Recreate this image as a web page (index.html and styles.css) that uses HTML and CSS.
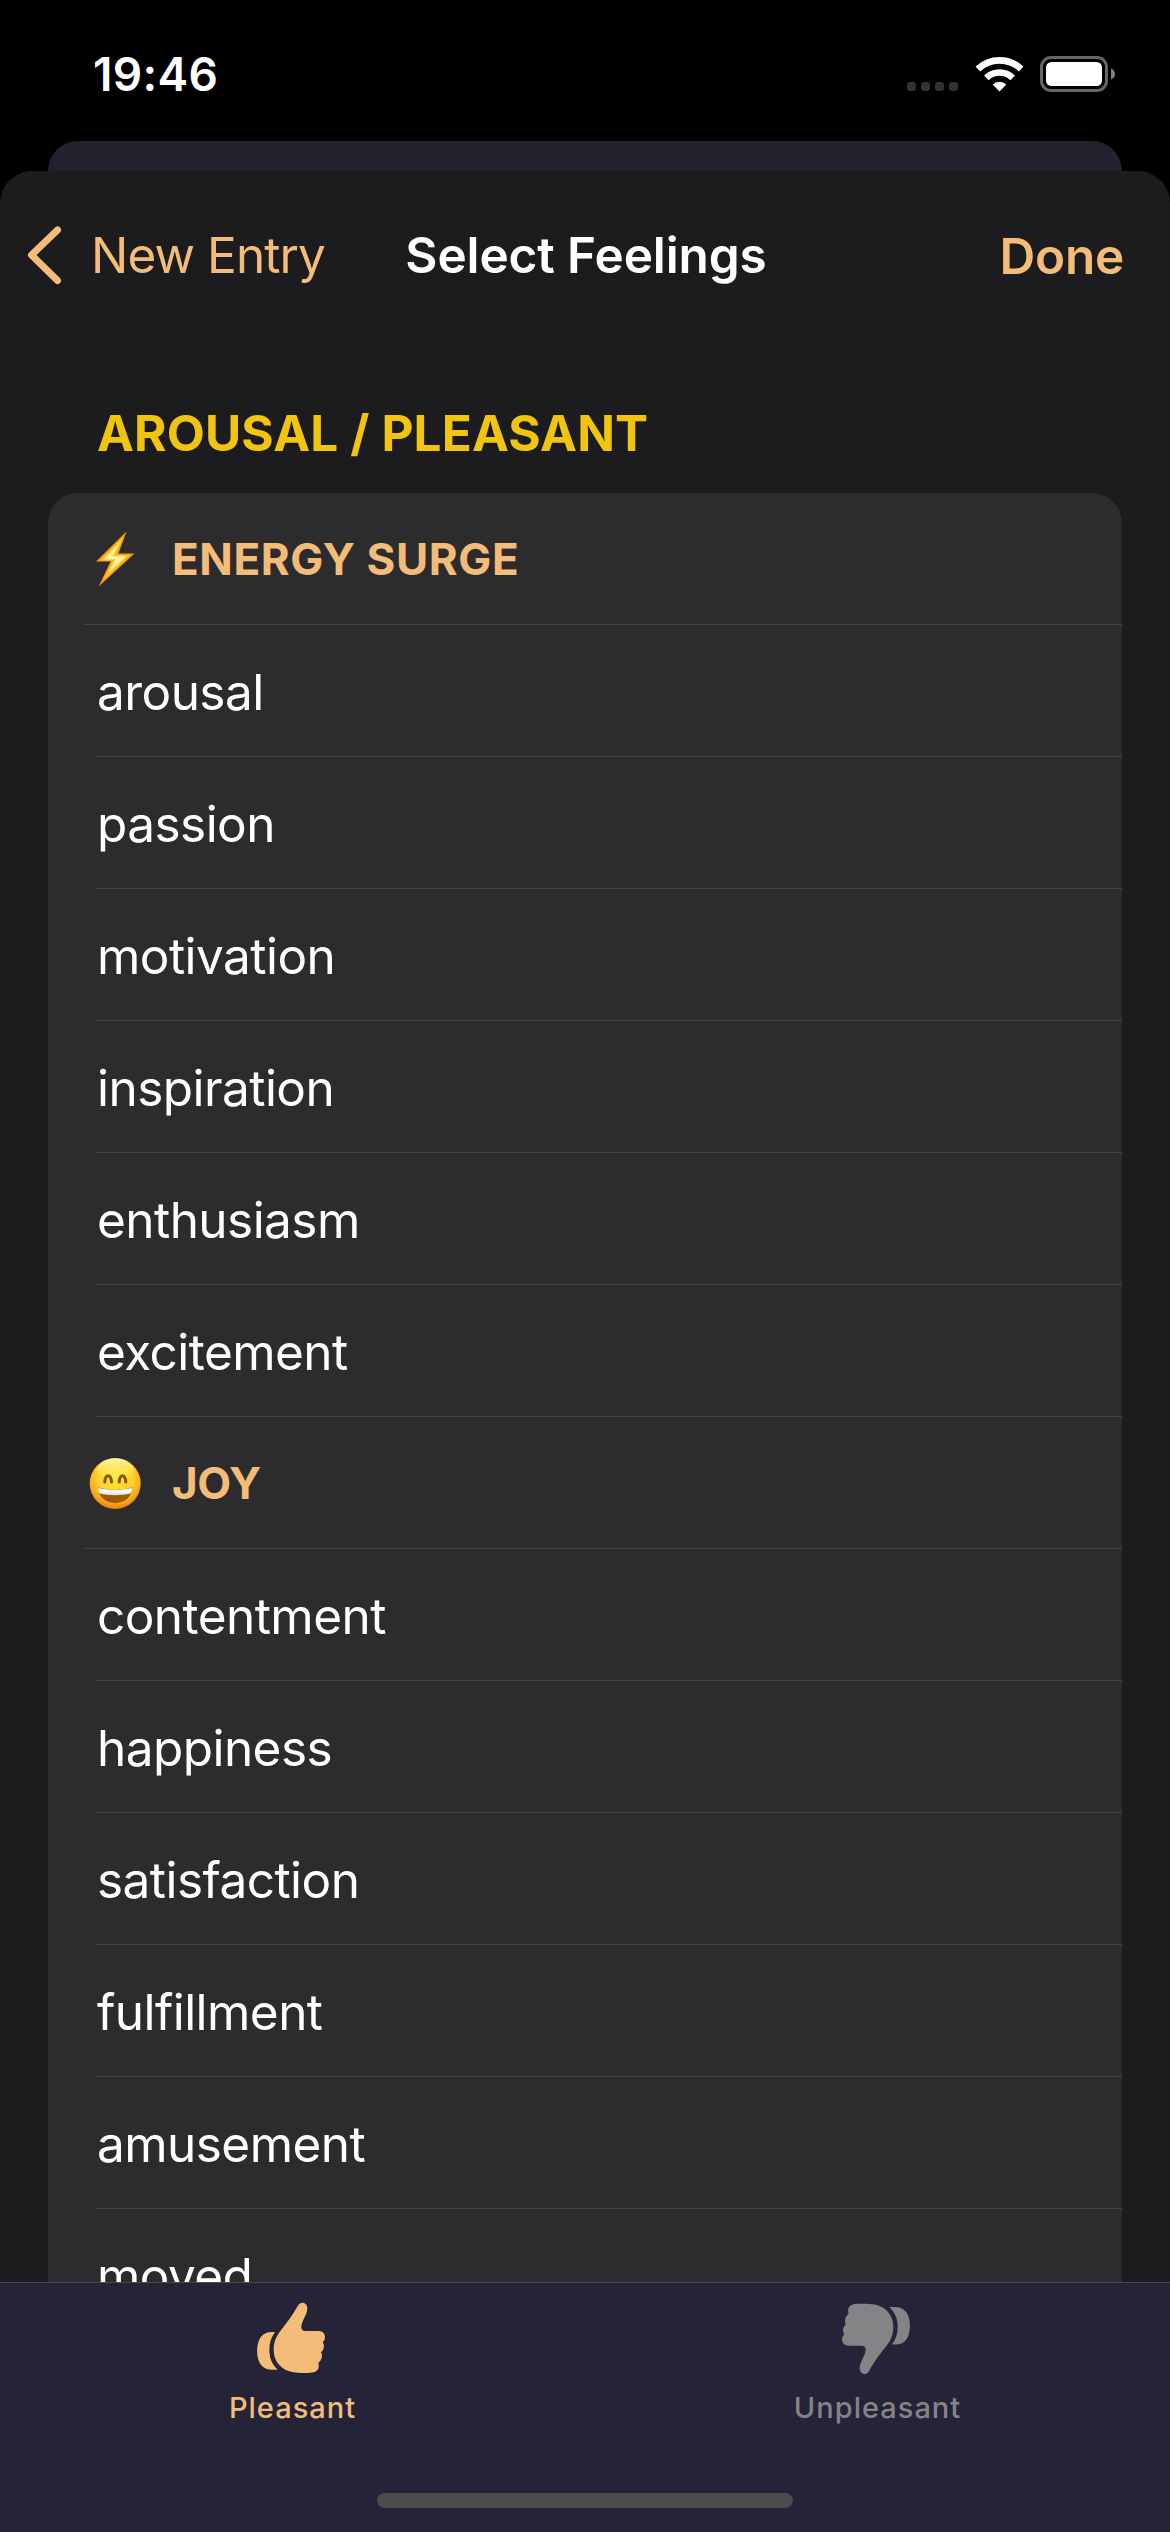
FILE: index.html
```
<!DOCTYPE html>
<html lang="en">
<head>
<meta charset="utf-8">
<title>Select Feelings</title>
<link rel="stylesheet" href="styles.css">
</head>
<body>
<div class="screen">
  <header class="status">
    <span class="clock">19:46</span>
    <div class="indicators">
      <div class="cell"><i></i><i></i><i></i><i></i></div>
      <svg class="wifi" viewBox="0 0 147 110" aria-hidden="true">
        <g fill="none" stroke="#fff" stroke-width="20">
          <path d="M8.500 41.500 A94 94 0 0 1 138.500 41.500"/>
          <path d="M34 68 A57 57 0 0 1 113 68"/>
        </g>
        <path d="M73.500 109 L53 88 A29 29 0 0 1 94 88Z" fill="#fff"/>
      </svg>
      <svg class="battery" viewBox="0 0 76 36" aria-hidden="true">
        <rect x="1.500" y="1.500" width="65" height="33" rx="9.500" fill="none" stroke="#666" stroke-width="3"/>
        <rect x="6" y="6" width="56" height="24" rx="5.500" fill="#fff"/>
        <path d="M71 12.500c5.300 2 5.300 9 0 11Z" fill="#808080"/>
      </svg>
    </div>
  </header>

  <div class="parent-sheet"></div>

  <main class="sheet">
    <nav class="nav">
      <a class="back">
        <svg class="chevron" viewBox="0 0 36 60" aria-hidden="true"><path d="M31.500 5 L5.500 30 L31.500 55.500" fill="none" stroke="#f3bc79" stroke-width="7" stroke-linecap="round" stroke-linejoin="round"/></svg>
        <span>New Entry</span>
      </a>
      <h1 class="title">Select Feelings</h1>
      <a class="done">Done</a>
    </nav>

    <h2 class="section">AROUSAL / PLEASANT</h2>

    <div class="list">
      <div class="group">
        <svg class="emoji" viewBox="0 -1 80 80" aria-hidden="true">
          <path d="M46.500 11.500 L16 41.500 H30.500 L18.700 66.500 L54.500 33.500 H38.500Z" fill="#f79a0c"/>
          <path d="M43.500 16.500 L20 40.500 H33 L23 60.500 L50.500 34.700 H35.800Z" fill="#ffc928"/>
          <path d="M40.500 21.500 L24 39.300 H35.500 L28.500 53 L46 36.300 H32.500Z" fill="#fff3a6"/>
        </svg>
        <h3>ENERGY SURGE</h3>
      </div>
      <div class="row">arousal</div>
      <div class="row">passion</div>
      <div class="row">motivation</div>
      <div class="row">inspiration</div>
      <div class="row">enthusiasm</div>
      <div class="row">excitement</div>
      <div class="group">
        <svg class="emoji" viewBox="0 -0.500 80 80" aria-hidden="true">
          <defs>
            <radialGradient id="face" cx=".5" cy=".36" r=".66"><stop offset="0" stop-color="#ffe93c"/><stop offset=".5" stop-color="#ffd42c"/><stop offset=".8" stop-color="#f9a91a"/><stop offset="1" stop-color="#dd7608"/></radialGradient>
            <linearGradient id="shine" x1="0" y1="0" x2="0" y2="1"><stop offset="0" stop-color="#fff6b8" stop-opacity=".9"/><stop offset="1" stop-color="#ffee50" stop-opacity="0"/></linearGradient>
            <linearGradient id="teeth" x1="0" y1="0" x2="0" y2="1"><stop offset="0" stop-color="#d4cfca"/><stop offset=".5" stop-color="#fff"/><stop offset="1" stop-color="#d8d8dc"/></linearGradient>
          </defs>
          <circle cx="35.200" cy="40" r="25.500" fill="url(#face)"/>
          <ellipse cx="35.200" cy="26" rx="18" ry="11" fill="url(#shine)"/>
          <g fill="none" stroke="#8a5006" stroke-width="3" stroke-linecap="round"><path d="M24.800 38.500 C25.400 30 30.600 30 31.600 38.500"/><path d="M39.200 38.500 C40 30 45 30 45.800 38.500"/></g>
          <path d="M18 43.500 C28 47.500 43 47.500 52.300 43.500 C52.300 65 18 65 18 43.500Z" fill="#a05c05"/>
          <path d="M18 43.800 C28 47.300 43 47.300 52.300 43.800 C52.200 46.500 51.600 48.500 50.600 50 C41 52.200 29 52.200 19.700 50 C18.600 48.500 18 46.500 18 43.800Z" fill="url(#teeth)"/>
        </svg>
        <h3 class="tight">JOY</h3>
      </div>
      <div class="row">contentment</div>
      <div class="row">happiness</div>
      <div class="row">satisfaction</div>
      <div class="row">fulfillment</div>
      <div class="row">amusement</div>
      <div class="row">moved</div>
    </div>
  </main>

  <footer class="tabbar">
    <div class="tabs">
      <a class="tab active">
        <svg class="thumb" viewBox="171 186 213 219" aria-hidden="true">
          <g id="thumb" fill="currentColor">
            <path d="M307 188 C316 188 322 195 322 205 C322 226 304 242 304 262 C304 269 308 273 316 273 H355 C369 273 375 282 375 292 C375 299 372 304 368 306 C374 315 373 330 363 337 C369 346 366 360 355 369 C360 386 353 397 330 398.500 C315 399.500 290 399 280 397 C245 391 221 365 221 330 C221 302 231 286 245 268 C254 257 263 245 270 235 C281 219 289 205 294 197 C298 190 302 188 307 188Z"/>
            <path d="M225 277 C206 274 190 279 181 293 C168 312 168 353 181 372 C192 388 205 390 233 389 C215 372 208 352 208 330 C208 308 214 291 225 277Z"/>
          </g>
        </svg>
        <span>Pleasant</span>
      </a>
      <a class="tab">
        <svg class="thumb" viewBox="171 186 213 219" aria-hidden="true"><use href="#thumb" transform="rotate(180 273 295)"/></svg>
        <span>Unpleasant</span>
      </a>
    </div>
    <div class="home"></div>
  </footer>
</div>
</body>
</html>
```
FILE: styles.css
```
* { box-sizing: border-box; }

body {
  margin: 0;
  background: #000;
  font-family: Inter, "Liberation Sans", sans-serif;
  color: #fff;
}

h1, h2, h3 { margin: 0; }

svg { display: block; flex: none; }

.screen {
  display: flex;
  flex-direction: column;
  width: 1170px;
  height: 2532px;
  overflow: hidden;
}

/* Status bar */
.status {
  display: flex;
  justify-content: space-between;
  flex: none;
  height: 141px;
  padding: 0 54px 0 93px;
}

.clock {
  margin-top: 44px;
  font-size: 46px;
  line-height: 60px;
  font-weight: 600;
  letter-spacing: 0.33px;
}

.indicators {
  display: flex;
  align-items: flex-end;
  height: 92px;
}

.cell {
  display: flex;
  gap: 5px;
  margin: 0 17px 1px 0;
}

.cell i {
  width: 9px;
  height: 9px;
  border-radius: 3px;
  background: #333;
}

.wifi { width: 49px; height: 37px; margin-right: 16px; }
.battery { width: 76px; height: 36px; }

/* Stacked sheets */
.parent-sheet {
  flex: none;
  height: 30px;
  margin: 0 48px;
  border-radius: 30px 30px 0 0;
  background: #22212e;
}

.sheet {
  flex: 1;
  min-height: 0;
  overflow: hidden;
  border-radius: 32px 32px 0 0;
  background: #1c1c1e;
}

.nav {
  display: grid;
  grid-template-columns: 1fr auto 1fr;
  align-items: center;
  height: 168px;
  padding: 0 46px 0 26px;
  font-size: 49.5px;
  line-height: 60px;
  color: #f3bc79;
}

.back {
  display: flex;
  align-items: center;
  gap: 29px;
  letter-spacing: -0.91px;
  white-space: nowrap;
}

.chevron { width: 36px; height: 60px; }

.title {
  margin-left: 22px;
  font-size: 49.5px;
  font-weight: 600;
  letter-spacing: -0.1px;
  color: #fff;
}

.done {
  justify-self: end;
  padding-top: 2px;
  font-weight: 600;
  letter-spacing: -0.22px;
}

.section {
  height: 154px;
  padding: 64px 97px 0;
  font-size: 49.5px;
  line-height: 60px;
  font-weight: 700;
  letter-spacing: 0.13px;
  color: #f1c40f;
}

/* Feelings list */
.list {
  margin: 0 48px;
  border-radius: 30px 30px 0 0;
  background: #2c2c2e;
}

.group, .row {
  display: flex;
  align-items: center;
  height: 132px;
  border-bottom: 1px solid #444447;
}

.group { margin-left: 36px; }

.emoji { width: 80px; height: 80px; margin-left: -4px; }

.group h3 {
  margin-left: 12px;
  font-size: 44px;
  line-height: 60px;
  font-weight: 700;
  letter-spacing: 0.62px;
  color: #f3bc79;
}

.group h3.tight { letter-spacing: -0.4px; }

.row {
  margin-left: 48px;
  padding: 3px 0 0 1px;
  font-size: 49.5px;
  letter-spacing: -0.55px;
}

/* Tab bar */
.tabbar {
  display: flex;
  flex-direction: column;
  align-items: center;
  justify-content: space-between;
  flex: none;
  height: 250px;
  padding-bottom: 24px;
  border-top: 1px solid #4a4a4d;
  background: #252338;
}

.tabs {
  display: grid;
  grid-template-columns: 1fr 1fr;
  width: 100%;
}

.tab {
  display: flex;
  flex-direction: column;
  align-items: center;
  padding-top: 19px;
  font-size: 29px;
  line-height: 36px;
  font-weight: 500;
  letter-spacing: 1px;
  color: #848486;
}

.tab.active { color: #f3bc79; }

.thumb { width: 71px; height: 73px; }

.tab span { margin-top: 15px; }

.home {
  width: 416px;
  height: 15px;
  border-radius: 8px;
  background: #4b4b4b;
}
```
